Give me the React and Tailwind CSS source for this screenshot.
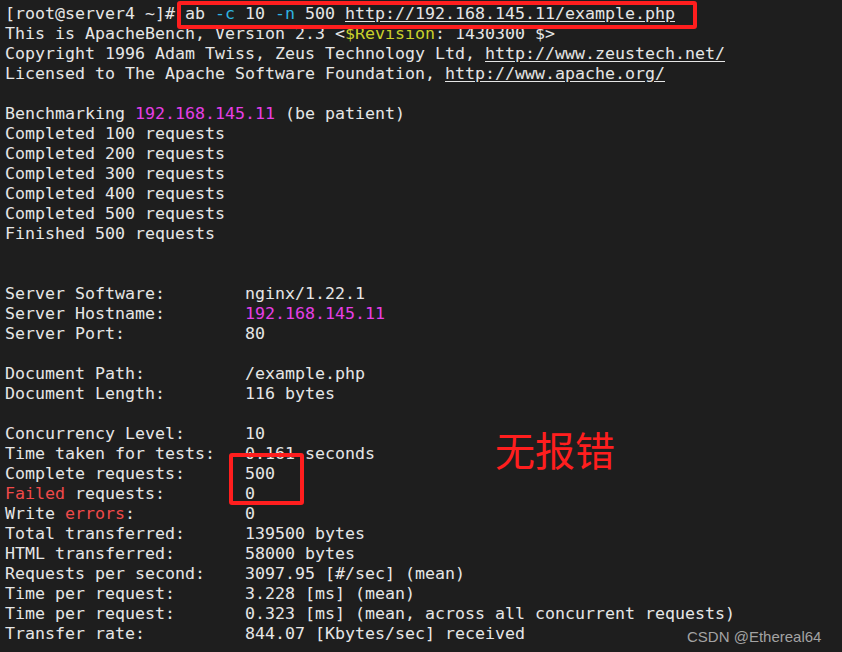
import React from 'react';

const pad = (s) => s.padEnd(24, ' ');

const Cy = ({ children }) => <span className="text-[#2fb4e0]">{children}</span>;
const Mg = ({ children }) => <span className="text-[#e63ee6]">{children}</span>;
const Rd = ({ children }) => <span className="text-[#f04a4a]">{children}</span>;
const Yl = ({ children }) => <span className="text-[#c9d12b]">{children}</span>;
const U = ({ children }) => <span className="underline underline-offset-2">{children}</span>;

const Row = ({ label, children }) => (
  <div>
    {pad(label)}
    {children}
  </div>
);

const Blank = () => <div>{' '}</div>;

export default function App() {
  return (
    <div className="relative w-[842px] h-[652px] overflow-hidden bg-[#1e1e1e]">
      <div
        className="whitespace-pre pt-[4px] pl-[5px] text-[16.61px] leading-[20px] text-[#e6e6e6]"
        style={{ fontFamily: '"DejaVu Sans Mono", monospace' }}
      >
        <div>
          [root@server4 ~]# ab <Cy>-c</Cy> 10 <Cy>-n</Cy> 500 <U>http://192.168.145.11/example.php</U>
        </div>
        <div>
          This is ApacheBench, Version 2.3 &lt;<Yl>$Revision</Yl>: 1430300 $&gt;
        </div>
        <div>
          Copyright 1996 Adam Twiss, Zeus Technology Ltd, <U>http://www.zeustech.net/</U>
        </div>
        <div>
          Licensed to The Apache Software Foundation, <U>http://www.apache.org/</U>
        </div>
        <Blank />
        <div>
          Benchmarking <Mg>192.168.145.11</Mg> (be patient)
        </div>
        <div>Completed 100 requests</div>
        <div>Completed 200 requests</div>
        <div>Completed 300 requests</div>
        <div>Completed 400 requests</div>
        <div>Completed 500 requests</div>
        <div>Finished 500 requests</div>
        <Blank />
        <Blank />
        <Row label="Server Software:">nginx/1.22.1</Row>
        <Row label="Server Hostname:">
          <Mg>192.168.145.11</Mg>
        </Row>
        <Row label="Server Port:">80</Row>
        <Blank />
        <Row label="Document Path:">/example.php</Row>
        <Row label="Document Length:">116 bytes</Row>
        <Blank />
        <Row label="Concurrency Level:">10</Row>
        <Row label="Time taken for tests:">0.161 seconds</Row>
        <Row label="Complete requests:">500</Row>
        <div>
          <Rd>Failed</Rd>
          {' requests:'.padEnd(18, ' ')}0
        </div>
        <div>
          Write <Rd>errors</Rd>
          {':'.padEnd(12, ' ')}0
        </div>
        <Row label="Total transferred:">139500 bytes</Row>
        <Row label="HTML transferred:">58000 bytes</Row>
        <Row label="Requests per second:">3097.95 [#/sec] (mean)</Row>
        <Row label="Time per request:">3.228 [ms] (mean)</Row>
        <Row label="Time per request:">0.323 [ms] (mean, across all concurrent requests)</Row>
        <Row label="Transfer rate:">844.07 [Kbytes/sec] received</Row>
      </div>

      {/* annotation overlays */}
      <div className="absolute left-[177px] top-[1px] w-[520px] h-[28px] border-4 border-[#ff1e1e] rounded-[3px]" />
      <div className="absolute left-[229px] top-[453px] w-[75px] h-[52px] border-4 border-[#ff1e1e] rounded-[3px]" />
      <div
        className="absolute left-[495px] top-[425px] text-[40px] leading-[48px] text-[#ff1e1e]"
        style={{ fontFamily: '"Noto Sans CJK SC", sans-serif' }}
      >
        无报错
      </div>
      <div
        className="absolute left-[687px] top-[627px] text-[15px] leading-[20px] text-[#a3a3a3]"
        style={{ fontFamily: '"Liberation Sans", Arial, sans-serif' }}
      >
        CSDN @Ethereal64
      </div>
    </div>
  );
}
